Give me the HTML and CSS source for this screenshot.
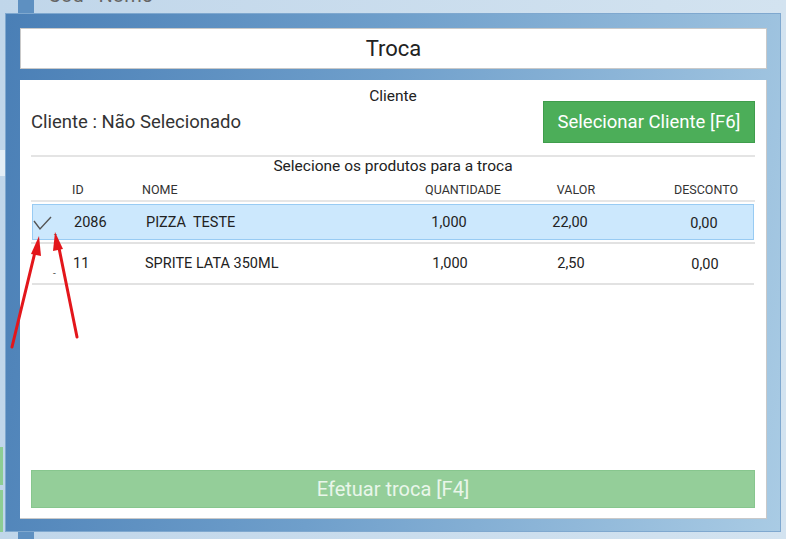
FILE: index.html
```html
<!DOCTYPE html>
<html>
<head>
    <title>Troca</title>
    <link rel="stylesheet" href="styles.css">
</head>
<body>
    <div class="desk">
        <div class="back-window">
            <div class="back-strip"></div>
            <div class="back-title">Cód &nbsp; Nome</div>
        </div>
        <div class="side-bit light"></div>
        <div class="side-bit green g1"></div>
        <div class="side-bit green g2"></div>

        <div class="modal">
            <div class="modal-header">Troca</div>

            <div class="modal-body">
                <div class="section-title">Cliente</div>
                <div class="client-row">
                    <span class="client-name">Cliente : Não Selecionado</span>
                    <button class="btn btn-green">Selecionar Cliente [F6]</button>
                </div>
                <hr class="divider">

                <div class="section-title">Selecione os produtos para a troca</div>
                <div class="grid head">
                    <div></div>
                    <div>ID</div>
                    <div class="name-head">NOME</div>
                    <div class="c">QUANTIDADE</div>
                    <div class="c">VALOR</div>
                    <div class="c desc">DESCONTO</div>
                </div>

                <div class="grid row selected">
                    <div class="check">
                        <svg width="20" height="16" viewBox="0 0 20 16">
                            <polyline points="1,5 7,13 18,1" fill="none" stroke="#555" stroke-width="1.4"/>
                        </svg>
                        <span class="tick-dash">-</span>
                    </div>
                    <div>2086</div>
                    <div>PIZZA&nbsp; TESTE</div>
                    <div class="c qtd">1,000</div>
                    <div class="c val">22,00</div>
                    <div class="c desc">0,00</div>
                </div>

                <div class="grid row">
                    <div class="check"><span class="tick-dash low">-</span></div>
                    <div>11</div>
                    <div>SPRITE LATA 350ML</div>
                    <div class="c qtd">1,000</div>
                    <div class="c val">2,50</div>
                    <div class="c desc">0,00</div>
                </div>

                <button class="btn btn-disabled">Efetuar troca [F4]</button>
            </div>
        </div>

        <!-- setas vermelhas da anotacao -->
        <svg class="arrows" width="786" height="539" viewBox="0 0 786 539">
            <line x1="12" y1="347" x2="35" y2="252" stroke="#e3161b" stroke-width="3" stroke-linecap="round"/>
            <polygon points="39,236 31,254 41,256" fill="#e3161b"/>
            <line x1="77" y1="337" x2="59" y2="248" stroke="#e3161b" stroke-width="3" stroke-linecap="round"/>
            <polygon points="55,232 53,251 63,249" fill="#e3161b"/>
        </svg>
    </div>
</body>
</html>
```

FILE: styles.css
```css
body {
    margin: 0;
    font-family: Roboto, "Liberation Sans", sans-serif;
    color: #222;
    background: #c6dbec;
}
.desk {
    position: relative;
    width: 786px;
    height: 539px;
    overflow: hidden;
    padding: 13px 5px 7px 5px;
    box-sizing: border-box;
    background: linear-gradient(90deg, #c0d6ea, #d3e3f0);
}
.back-window {
    position: absolute;
    left: 18px;
    top: 0;
    right: 0;
    bottom: 0;
}
.back-strip {
    position: absolute;
    left: 0;
    top: 0;
    bottom: 0;
    width: 16px;
    background: #5e90c1;
}
.back-title {
    position: absolute;
    left: 30px;
    top: -17px;
    font-size: 20px;
    color: #666;
}
.side-bit {
    position: absolute;
    left: 0;
    width: 4px;
}
.side-bit.light {
    top: 150px;
    height: 26px;
    width: 5px;
    background: #e4eef6;
}
.side-bit.green {
    background: #8dcd94;
    width: 3px;
}
.g1 {
    top: 447px;
    height: 38px;
}
.g2 {
    top: 490px;
    height: 42px;
}
.modal {
    position: relative;
    height: 519px;
    box-sizing: border-box;
    padding: 14px 13px 12px 14px;
    display: flex;
    flex-direction: column;
    gap: 11px;
    background: linear-gradient(100deg, #4a7fb6 0%, #6f9fcb 45%, #a9cbe4 100%);
    border: 1px solid #7fa8cf;
}
.modal-header {
    height: 41px;
    background: #fff;
    border: 1px solid #c9c9c9;
    box-sizing: border-box;
    display: flex;
    align-items: center;
    justify-content: center;
    font-size: 22px;
    color: #222;
}
.modal-body {
    flex: 1;
    background: #fff;
    border-right: 1px solid #c9c9c9;
    border-bottom: 1px solid #c9c9c9;
    padding: 7px 11px 10px 11px;
    display: flex;
    flex-direction: column;
}
.section-title {
    text-align: center;
    font-size: 15.5px;
    line-height: 18px;
}
.client-row {
    display: flex;
    justify-content: space-between;
    align-items: center;
    margin-top: -4px;
}
.client-name {
    font-size: 18.5px;
    color: #333;
}
.btn {
    font-family: inherit;
    font-size: 18.5px;
    border-radius: 0;
    cursor: pointer;
}
.btn-green {
    width: 212px;
    height: 42px;
    background: #4cae59;
    border: 1px solid #3f9d4c;
    color: #fff;
}
.divider {
    border: none;
    height: 2px;
    background: #e4e4e4;
    margin: 12px 0 0 0;
}
.grid {
    display: grid;
    grid-template-columns: 41px 72px 1fr 120px 106px 126px;
    align-items: center;
}
.grid .c {
    text-align: center;
}
.grid .desc {
    padding-left: 28px;
}
.head {
    font-size: 12.5px;
    color: #333;
    height: 22px;
    margin-top: 3px;
    border-bottom: 2px solid #e6e6e6;
}
.head .name-head {
    margin-left: -2px;
}
.row {
    font-size: 14.5px;
    height: 42px;
    border-bottom: 2px solid #e2e2e2;
    box-sizing: border-box;
    margin: 0 1px;
}
.row.selected {
    height: 36px;
    margin: 2px 1px 3px 1px;
    background: #cce8fd;
    border: 1px solid #98cbf3;
    position: relative;
}
.row.selected::after {
    content: "";
    position: absolute;
    left: -2px;
    right: -2px;
    bottom: -5px;
    height: 2px;
    background: #e2e2e2;
}
.row .qtd {
    padding-right: 24px;
}
.row .val {
    padding-right: 8px;
}
.row .desc {
    padding-top: 3px;
}
.check {
    position: relative;
    height: 100%;
}
.check svg {
    position: absolute;
    left: 0;
    top: 11px;
}
.tick-dash {
    position: absolute;
    left: 21px;
    top: 24px;
    font-size: 10px;
    color: #555;
}
.tick-dash.low {
    top: 25px;
}
.btn-disabled {
    margin-top: auto;
    width: 100%;
    height: 38px;
    font-size: 20px;
    background: #94ce99;
    border: 1px solid #87c68e;
    color: #e9f6ea;
    cursor: default;
}
.arrows {
    position: absolute;
    left: 0;
    top: 0;
    pointer-events: none;
}
```
